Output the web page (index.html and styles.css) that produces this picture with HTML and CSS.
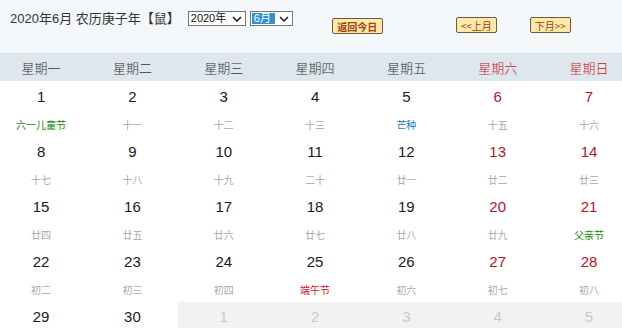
FILE: index.html
```html
<!DOCTYPE html>
<html lang="zh">
<head>
<meta charset="utf-8">
<link rel="stylesheet" href="styles.css">
</head>
<body>
<div class="top">
  <div class="title">2020年6月 农历庚子年【鼠】</div>
  <div class="sel sel-year"><span class="sel-text">2020年</span><svg class="chev" width="10" height="6" viewBox="0 0 10 6"><path d="M1 1 L5 5 L9 1" fill="none" stroke="#222" stroke-width="1.6"/></svg></div>
  <div class="sel sel-month"><span class="sel-text hl">6月</span><svg class="chev" width="10" height="6" viewBox="0 0 10 6"><path d="M1 1 L5 5 L9 1" fill="none" stroke="#222" stroke-width="1.6"/></svg></div>
  <button class="btn btn-today">返回今日</button>
  <button class="btn btn-prev">&lt;&lt;上月</button>
  <button class="btn btn-next">下月&gt;&gt;</button>
</div>
<div class="weekbar">
  <div class="week">
    <div>星期一</div><div>星期二</div><div>星期三</div><div>星期四</div><div>星期五</div><div class="we">星期六</div><div class="we">星期日</div>
  </div>
</div>
<div class="daywrap">
<div class="days">
  <div class="cell"><div class="n">1</div><div class="l green">六一儿童节</div></div>
  <div class="cell"><div class="n">2</div><div class="l">十一</div></div>
  <div class="cell"><div class="n">3</div><div class="l">十二</div></div>
  <div class="cell"><div class="n">4</div><div class="l">十三</div></div>
  <div class="cell"><div class="n">5</div><div class="l blue">芒种</div></div>
  <div class="cell"><div class="n red">6</div><div class="l">十五</div></div>
  <div class="cell"><div class="n red">7</div><div class="l">十六</div></div>

  <div class="cell"><div class="n">8</div><div class="l">十七</div></div>
  <div class="cell"><div class="n">9</div><div class="l">十八</div></div>
  <div class="cell"><div class="n">10</div><div class="l">十九</div></div>
  <div class="cell"><div class="n">11</div><div class="l">二十</div></div>
  <div class="cell"><div class="n">12</div><div class="l">廿一</div></div>
  <div class="cell"><div class="n red">13</div><div class="l">廿二</div></div>
  <div class="cell"><div class="n red">14</div><div class="l">廿三</div></div>

  <div class="cell"><div class="n">15</div><div class="l">廿四</div></div>
  <div class="cell"><div class="n">16</div><div class="l">廿五</div></div>
  <div class="cell"><div class="n">17</div><div class="l">廿六</div></div>
  <div class="cell"><div class="n">18</div><div class="l">廿七</div></div>
  <div class="cell"><div class="n">19</div><div class="l">廿八</div></div>
  <div class="cell"><div class="n red">20</div><div class="l">廿九</div></div>
  <div class="cell"><div class="n red">21</div><div class="l green">父亲节</div></div>

  <div class="cell"><div class="n">22</div><div class="l">初二</div></div>
  <div class="cell"><div class="n">23</div><div class="l">初三</div></div>
  <div class="cell"><div class="n">24</div><div class="l">初四</div></div>
  <div class="cell"><div class="n">25</div><div class="l redl">端午节</div></div>
  <div class="cell"><div class="n">26</div><div class="l">初六</div></div>
  <div class="cell"><div class="n red">27</div><div class="l">初七</div></div>
  <div class="cell"><div class="n red">28</div><div class="l">初八</div></div>

  <div class="cell last"><div class="n">29</div></div>
  <div class="cell last"><div class="n">30</div></div>
  <div class="cell last other"><div class="n">1</div></div>
  <div class="cell last other"><div class="n">2</div></div>
  <div class="cell last other"><div class="n">3</div></div>
  <div class="cell last other"><div class="n">4</div></div>
  <div class="cell last other"><div class="n">5</div></div>
</div>
</div>
</body>
</html>
```
FILE: styles.css
```css
html, body {
  margin: 0;
  padding: 0;
  background: #fff;
  overflow: hidden;
}
body {
  width: 622px;
  height: 328px;
  font-family: "Liberation Sans", "Noto Sans CJK SC", sans-serif;
  color: #222;
}
.top {
  height: 53px;
  background: #f4f8fb;
  display: flex;
  align-items: flex-start;
  box-sizing: border-box;
}
.title {
  margin: 10px 0 0 10px;
  font-size: 13px;
  line-height: 17px;
  color: #333;
  white-space: nowrap;
}
.sel {
  margin-top: 11px;
  height: 15px;
  box-sizing: border-box;
  border: 1px solid #767676;
  background: #fff;
  display: flex;
  align-items: center;
  font-size: 11px;
  color: #111;
}
.sel-year {
  margin-left: 8px;
  width: 58px;
}
.sel-month {
  margin-left: 4px;
  width: 43px;
}
.sel-text {
  flex: 1;
  line-height: 13px;
  padding-left: 2px;
}
.sel-text.hl {
  background: #3192d2;
  color: #fff;
  margin: 1px 4px 1px 1px;
  line-height: 11px;
}
.chev {
  margin-right: 3px;
}
.btn {
  margin-top: 17px;
  height: 16px;
  box-sizing: border-box;
  padding: 0 2px;
  border: 1px solid #6e5a40;
  border-radius: 2px;
  background: #fde9a9;
  color: #a0400a;
  font-family: "Noto Sans CJK SC", sans-serif;
  font-size: 10px;
  font-weight: bold;
  line-height: 13px;
  white-space: nowrap;
}
.btn-today {
  margin-left: 39px;
  margin-top: 18px;
  width: 51px;
}
.btn-prev {
  margin-left: 73px;
  width: 41px;
  font-weight: normal;
}
.btn-next {
  margin-left: 33px;
  width: 41px;
  font-weight: normal;
}
.weekbar {
  background: #dee7ed;
  height: 28px;
  overflow: hidden;
}
.daywrap {
  overflow: hidden;
  height: 247px;
}
.week, .days {
  display: grid;
  grid-template-columns: repeat(7, 91.33px);
  width: 639.3px;
  margin-left: -4.6px;
}
.week {
  height: 28px;
  align-items: center;
  text-align: center;
  font-family: "Noto Sans CJK SC", sans-serif;
  font-size: 13px;
  font-weight: 300;
  color: #333;
}
.week .we {
  color: #c8141e;
}
.days {
  margin-top: 1px;
}
.cell {
  height: 55px;
  text-align: center;
  box-sizing: border-box;
  padding-top: 6px;
}
.cell.last {
  height: 26px;
}
.n {
  font-size: 15px;
  line-height: 18px;
  color: #1a1a1a;
}
.n.red {
  color: #b8141e;
}
.l {
  margin-top: 9px;
  font-family: "Noto Sans CJK SC", sans-serif;
  font-size: 10px;
  line-height: 20px;
  color: #a8a8a8;
}
.l.green {
  color: #0a8a0a;
}
.l.blue {
  color: #1c7cc0;
}
.l.redl {
  color: #d0141e;
}
.other {
  background: #f2f2f2;
}
.other .n {
  color: #c8c8c8;
}
```
